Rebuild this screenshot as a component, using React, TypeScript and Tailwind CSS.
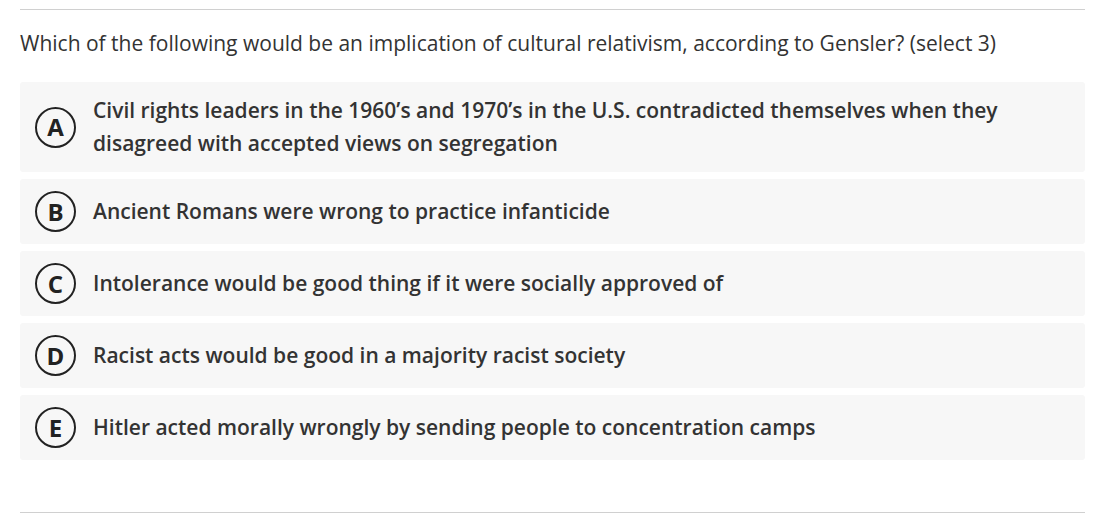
import React from "react";

const options = [
  { l: "A", t: "Civil rights leaders in the 1960’s and 1970’s in the U.S. contradicted themselves when they disagreed with accepted views on segregation" },
  { l: "B", t: "Ancient Romans were wrong to practice infanticide" },
  { l: "C", t: "Intolerance would be good thing if it were socially approved of" },
  { l: "D", t: "Racist acts would be good in a majority racist society" },
  { l: "E", t: "Hitler acted morally wrongly by sending people to concentration camps" },
];

export default function App() {
  return (
    <div className="w-[1105px] h-[525px] bg-white px-[20px] pt-[9px]" style={{ fontFamily: '"Open Sans", sans-serif' }}>
      <div className="border-t border-[#d0d0d0]" />
      <div className="mt-[18px] text-[21px] leading-[30px] text-[#333333]">
        Which of the following would be an implication of cultural relativism, according to Gensler? (select 3)
      </div>
      <div className="mt-[24px] flex flex-col gap-[7px]">
        {options.map((o) => (
          <div key={o.l} className="flex items-center bg-[#f7f7f7] rounded-[3px] pl-[15px] pr-[60px] py-[12px] min-h-[65px]">
            <div className="shrink-0 w-[41px] h-[41px] rounded-full border-[2.5px] border-[#222222] flex items-center justify-center text-[24px] font-bold text-[#222222] leading-none">
              {o.l}
            </div>
            <div className="ml-[17px] text-[21px] leading-[33px] font-semibold text-[#333333]">{o.t}</div>
          </div>
        ))}
      </div>
      <div className="mt-[52px] border-t border-[#d0d0d0]" />
    </div>
  );
}
